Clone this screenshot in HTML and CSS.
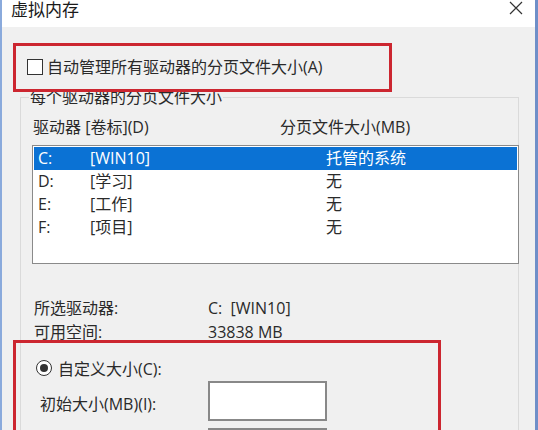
FILE: index.html
```html
<!DOCTYPE html>
<html lang="zh-CN">
<head>
    <meta charset="UTF-8">
    <title>虚拟内存</title>
    <link rel="stylesheet" href="styles.css">
</head>
<body>
    <div class="dialog">
        <div class="titlebar">
            <span class="title">虚拟内存</span>
            <svg class="close" width="14" height="14" viewBox="0 0 14 14"><path d="M1 1L13 13M13 1L1 13" stroke="#333" stroke-width="1.2" fill="none"/></svg>
        </div>
        <div class="content">
            <div class="auto-row"><span class="checkbox"></span>自动管理所有驱动器的分页文件大小(A)</div>
            <fieldset class="group">
                <legend>每个驱动器的分页文件大小</legend>
                <div class="list-head">
                    <span>驱动器 [卷标](D)</span>
                    <span>分页文件大小(MB)</span>
                </div>
                <div class="drive-list">
                    <div class="drive-row selected"><span>C:</span><span>[WIN10]</span><span>托管的系统</span></div>
                    <div class="drive-row"><span>D:</span><span>[学习]</span><span>无</span></div>
                    <div class="drive-row"><span>E:</span><span>[工作]</span><span>无</span></div>
                    <div class="drive-row"><span>F:</span><span>[项目]</span><span>无</span></div>
                </div>
                <div class="info">
                    <span>所选驱动器:</span><span>C:&nbsp;&nbsp;[WIN10]</span>
                    <span>可用空间:</span><span>33838 MB</span>
                </div>
                <div class="radio-row"><span class="radio"></span>自定义大小(C):</div>
                <div class="size-row"><span class="size-label">初始大小(MB)(I):</span><span class="input"></span></div>
                <div class="size-row"><span class="size-label"></span><span class="input"></span></div>
            </fieldset>
        </div>
        <div class="mark mark-auto"></div>
        <div class="mark mark-custom"></div>
    </div>
</body>
</html>
```

FILE: styles.css
```css
body {
    margin: 0;
    font-family: "Open Sans", "Noto Sans CJK SC", sans-serif;
    font-size: 16px;
    color: #2a2a2a;
    background: #f0f0f0;
}
.dialog {
    position: relative;
    box-sizing: border-box;
    width: 538px;
    height: 430px;
    overflow: hidden;
    background: #f0f0f0;
    border-left: 2px solid #8aaadc;
    border-right: 3px solid #6f8fc8;
}
.titlebar {
    height: 27px;
    background: #fff;
    display: flex;
    justify-content: space-between;
    align-items: flex-start;
    padding: 0 12px 0 9px;
}
.title {
    font-size: 17px;
    line-height: 18px;
    padding-top: 1px;
    color: #1a1a1a;
}
.close {
    margin-top: 1px;
}
.content {
    padding-top: 31px;
}
.auto-row {
    display: flex;
    align-items: center;
    height: 18px;
    line-height: 18px;
    padding-left: 25px;
}
.checkbox {
    box-sizing: border-box;
    width: 16px;
    height: 16px;
    border: 1.5px solid #333;
    background: #fff;
    margin-right: 4px;
}
.group {
    box-sizing: border-box;
    width: 499px;
    min-width: 0;
    margin: 12px 0 0 18px;
    padding: 0;
    border: 1px solid #dadada;
}
.group legend {
    margin-left: 8px;
    padding: 0 1px;
    line-height: 18px;
}
.list-head {
    display: grid;
    grid-template-columns: 247px auto;
    margin-top: 12px;
    padding-left: 12px;
    line-height: 18px;
}
.drive-list {
    box-sizing: border-box;
    height: 119px;
    margin: 9px -1px 0 11px;
    padding: 1px;
    background: #fff;
    border: 1px solid #8a8a8a;
}
.drive-row {
    display: grid;
    grid-template-columns: 52px 236px auto;
    height: 23px;
    line-height: 23px;
    padding-left: 4px;
}
.drive-row.selected {
    background: #0b72d4;
    color: #fff;
}
.info {
    display: grid;
    grid-template-columns: 174px auto;
    margin-top: 32px;
    padding-left: 13px;
    line-height: 24px;
}
.radio-row {
    display: flex;
    align-items: center;
    height: 20px;
    margin-top: 14px;
    padding-left: 15px;
}
.radio {
    box-sizing: border-box;
    width: 16px;
    height: 16px;
    border: 1.5px solid #333;
    border-radius: 50%;
    background: #fff;
    margin-right: 6px;
    display: flex;
    align-items: center;
    justify-content: center;
}
.radio::after {
    content: "";
    width: 8px;
    height: 8px;
    border-radius: 50%;
    background: #333;
}
.size-row {
    display: flex;
    align-items: center;
    height: 40px;
    margin-top: 3px;
    padding-left: 19px;
}
.size-row + .size-row {
    margin-top: 7px;
}
.size-label {
    width: 168px;
    padding-top: 3px;
}
.input {
    box-sizing: border-box;
    width: 119px;
    height: 40px;
    background: #fff;
    border: 2px solid #888;
}
.mark {
    position: absolute;
    box-sizing: border-box;
    border: 3px solid #cc2630;
}
.mark-auto {
    left: 11px;
    top: 43px;
    width: 379px;
    height: 49px;
}
.mark-custom {
    left: 11px;
    top: 340px;
    width: 428px;
    height: 140px;
}
```
